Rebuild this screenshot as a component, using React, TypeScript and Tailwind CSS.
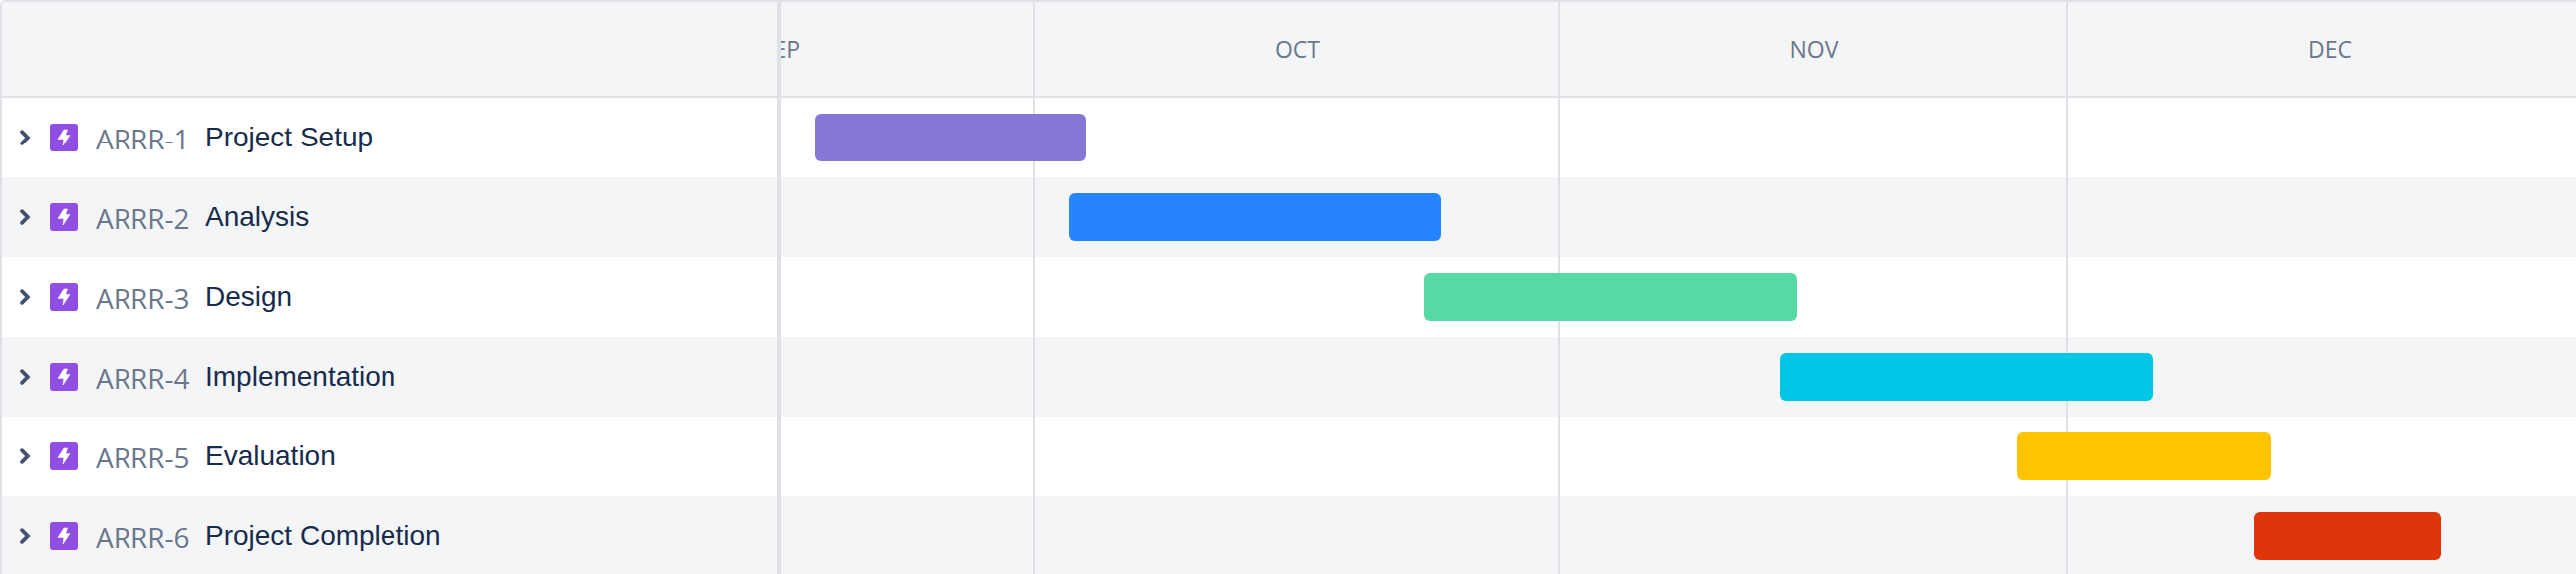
const font = "[font-family:'Open_Sans',sans-serif]";

const months = [
  { label: "OCT", width: "w-[527px]" },
  { label: "NOV", width: "w-[510px]" },
  { label: "DEC", width: "w-[526px]" },
];

const tasks = [
  { key: "ARRR-1", name: "Project Setup", bar: "ml-[34px] w-[272px] bg-[#8777d9]" },
  { key: "ARRR-2", name: "Analysis", bar: "ml-[289px] w-[374px] bg-[#2684ff]" },
  { key: "ARRR-3", name: "Design", bar: "ml-[646px] w-[374px] bg-[#57d9a3]" },
  { key: "ARRR-4", name: "Implementation", bar: "ml-[1003px] w-[374px] bg-[#00c7e6]" },
  { key: "ARRR-5", name: "Evaluation", bar: "ml-[1241px] w-[255px] bg-[#ffc400]" },
  { key: "ARRR-6", name: "Project Completion", bar: "ml-[1479px] w-[187px] bg-[#de350b]" },
];

function Chevron() {
  return (
    <svg width="12" height="18" viewBox="0 0 12 18" className="shrink-0">
      <path d="M3 3.2 L8.8 9 L3 14.8" fill="none" stroke="#42526e" strokeWidth="3.8" strokeLinecap="round" />
    </svg>
  );
}

function EpicIcon() {
  return (
    <span className="flex h-7 w-7 shrink-0 items-center justify-center rounded-[3px] bg-[#904ee2]">
      <svg width="14" height="18" viewBox="0 0 14 18">
        <path
          d="M7 1 H10.5 L8.6 6.6 H13 L6 17 L6.9 10.4 H1 Z"
          fill="#fff"
          stroke="#fff"
          strokeWidth="0.6"
          strokeLinejoin="round"
        />
      </svg>
    </span>
  );
}

export default function App() {
  return (
    <div className="relative h-[576px] w-[2586px] overflow-hidden rounded-tl-[6px] border-l-2 border-t-2 border-[#dfe1e6] bg-white">
      <div className="flex h-[96px] border-b-2 border-[#dfe1e6] bg-[#f4f5f7]">
        <div className="w-[778px] shrink-0" />
        <div className="w-[4px] shrink-0 bg-[#dfe1e6]" />
        <div className={`flex flex-1 overflow-hidden text-[23px] text-[#6b778c] ${font}`}>
          <div className="flex w-[255px] shrink-0 items-center justify-end border-r-2 border-[#dfe1e6] pr-[234px]">
            <span>SEP</span>
          </div>
          {months.map((m) => (
            <div
              key={m.label}
              className={`flex shrink-0 items-center justify-center border-r-2 border-[#dfe1e6] pl-[2px] ${m.width}`}
            >
              {m.label}
            </div>
          ))}
        </div>
      </div>
      {tasks.map((t, i) => (
        <div key={t.key} className={`flex h-[80px] ${i % 2 ? "bg-[#f4f5f7]" : "bg-white"}`}>
          <div className="flex w-[778px] shrink-0 items-center">
            <span className="ml-[17px] flex">
              <Chevron />
            </span>
            <span className="ml-[19px]">
              <EpicIcon />
            </span>
            <span className={`ml-[18px] w-[94px] translate-y-[1px] whitespace-nowrap text-[28px] leading-none text-[#6b778c] ${font}`}>
              {t.key}
            </span>
            <span className="ml-[16px] whitespace-nowrap text-[28px] leading-none text-[#172b4d] [font-family:'Liberation_Sans',sans-serif]">
              {t.name}
            </span>
          </div>
          <div className="w-[4px] shrink-0 bg-[#dfe1e6]" />
          <div className="relative flex-1">
            <div className="absolute bottom-0 left-[253px] top-0 w-[2px] bg-[#dfe1e6]" />
            <div className="absolute bottom-0 left-[780px] top-0 w-[2px] bg-[#dfe1e6]" />
            <div className="absolute bottom-0 left-[1290px] top-0 w-[2px] bg-[#dfe1e6]" />
            <div className={`relative mt-[16px] h-[48px] rounded-[6px] ${t.bar}`} />
          </div>
        </div>
      ))}
    </div>
  );
}
